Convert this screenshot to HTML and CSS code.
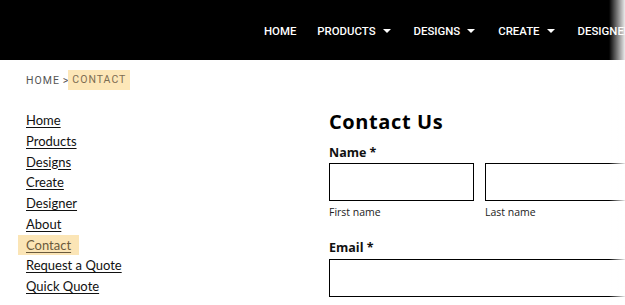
FILE: index.html
```html
<!DOCTYPE html>
<html lang="en">
<head>
<meta charset="utf-8">
<title>Contact</title>
<link rel="stylesheet" href="styles.css">
</head>
<body>
<header class="topbar">
  <nav class="mainnav">
    <a class="navitem" href="#">HOME</a>
    <a class="navitem" href="#">PRODUCTS <span class="caret"></span></a>
    <a class="navitem" href="#">DESIGNS <span class="caret"></span></a>
    <a class="navitem" href="#">CREATE <span class="caret"></span></a>
    <a class="navitem" href="#">DESIGNER</a>
    <a class="navitem" href="#">ABOUT</a>
  </nav>
</header>
<div class="crumbs"><span class="crumb">HOME</span><span class="sep">&gt;</span><span class="crumb current">CONTACT</span></div>
<div class="content">
  <aside class="sidenav">
    <a class="sidelink" href="#">Home</a>
    <a class="sidelink" href="#">Products</a>
    <a class="sidelink" href="#">Designs</a>
    <a class="sidelink" href="#">Create</a>
    <a class="sidelink" href="#">Designer</a>
    <a class="sidelink" href="#">About</a>
    <a class="sidelink active" href="#">Contact</a>
    <a class="sidelink" href="#">Request a Quote</a>
    <a class="sidelink" href="#">Quick Quote</a>
  </aside>
  <main class="main">
    <h1 class="title">Contact Us</h1>
    <form class="form">
      <div class="field">
        <div class="label">Name *</div>
        <div class="namerow">
          <div class="sub">
            <input class="input" type="text">
            <div class="hint">First name</div>
          </div>
          <div class="sub">
            <input class="input" type="text">
            <div class="hint">Last name</div>
          </div>
        </div>
      </div>
      <div class="field email">
        <div class="label">Email *</div>
        <input class="input wide" type="email">
      </div>
    </form>
  </main>
</div>
<div class="fade"></div>
</body>
</html>
```
FILE: styles.css
```css
html, body {
  margin: 0;
  padding: 0;
  background: #fff;
  overflow: hidden;
}
body {
  width: 625px;
  height: 305px;
  font-family: "Lato", "Liberation Sans", sans-serif;
  color: #111;
}
.topbar {
  height: 60px;
  background: #000;
  display: flex;
  align-items: center;
  padding-left: 264px;
  padding-top: 2px;
  box-sizing: border-box;
  overflow: hidden;
}
.mainnav {
  display: flex;
  align-items: center;
  white-space: nowrap;
  gap: 21px;
}
.navitem {
  color: #fff;
  text-decoration: none;
  font-family: "Roboto", sans-serif;
  font-weight: 500;
  font-size: 11.4px;
  display: flex;
  align-items: center;
}
.caret {
  display: inline-block;
  width: 0;
  height: 0;
  border-left: 4px solid transparent;
  border-right: 4px solid transparent;
  border-top: 4.5px solid #fff;
  margin-left: 7px;
  margin-right: 2px;
}
.crumbs {
  margin-top: 10px;
  height: 20px;
  display: flex;
  align-items: center;
  padding-left: 26px;
  font-family: "Roboto", sans-serif;
  font-size: 10.5px;
  letter-spacing: 1px;
  color: #555;
}
.sep {
  margin: 0 0 0 3px;
  letter-spacing: 0;
}
.crumb.current {
  background: #fde7b8;
  color: #7d6d52;
  padding: 0 4px 0 4px;
  line-height: 20px;
}
.content {
  display: grid;
  grid-template-columns: 303px 320px;
  padding-left: 26px;
  margin-top: 20px;
}
.sidenav {
  display: flex;
  flex-direction: column;
  align-items: flex-start;
}
.sidelink {
  font-size: 13px;
  line-height: 20.75px;
  color: #111;
  text-decoration: underline;
  text-underline-offset: 2px;
}
.sidelink.active {
  background: #fbe5b6;
  color: #6b5a3c;
  padding: 0 8px;
  margin-left: -8px;
}
.main {
  display: flex;
  flex-direction: column;
}
.title {
  margin: 0;
  font-family: "Open Sans", sans-serif;
  font-weight: 700;
  font-size: 20px;
  line-height: 24px;
  letter-spacing: 0.6px;
  color: #000;
}
.form {
  display: flex;
  flex-direction: column;
}
.field {
  display: flex;
  flex-direction: column;
  margin-top: 11px;
}
.field.email {
  margin-top: 21px;
}
.label {
  font-family: "Open Sans", sans-serif;
  font-weight: 700;
  font-size: 12.5px;
  line-height: 16px;
  color: #111;
  margin-bottom: 2px;
}
.namerow {
  display: flex;
  gap: 11px;
}
.sub {
  display: flex;
  flex-direction: column;
}
.input {
  box-sizing: border-box;
  width: 145px;
  height: 38px;
  border: 1px solid #000;
  border-radius: 0;
  margin: 0;
  padding: 0;
  background: #fff;
}
.input.wide {
  width: 301px;
}
.hint {
  font-family: "Open Sans", sans-serif;
  font-size: 10.5px;
  line-height: 14px;
  color: #222;
  margin-top: 4px;
}
.field.email .label {
  margin-bottom: 3px;
}
.fade {
  position: fixed;
  top: 0;
  right: 0;
  width: 16px;
  height: 100%;
  background: linear-gradient(to right, rgba(255,255,255,0), rgba(255,255,255,0.92));
  pointer-events: none;
}
```
